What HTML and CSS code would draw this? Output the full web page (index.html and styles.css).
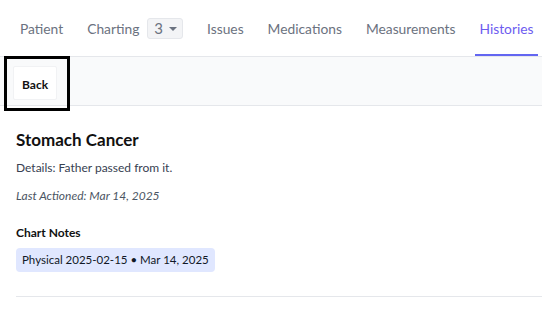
FILE: index.html
```html
<!doctype html>
<html>
  <head>
    <meta charset="utf-8">
    <title>Histories</title>
    <link rel="stylesheet" href="styles.css">
  </head>
  <body>
    <nav class="tabs">
      <a class="tab">Patient</a>
      <a class="tab">Charting <span class="count-select">3 <span class="caret"></span></span></a>
      <a class="tab">Issues</a>
      <a class="tab">Medications</a>
      <a class="tab">Measurements</a>
      <a class="tab active">Histories</a>
    </nav>
    <div class="toolbar">
      <button class="back">Back</button>
      <div class="highlight"></div>
    </div>
    <div class="history">
      <h2>Stomach Cancer</h2>
      <p class="details">Details: Father passed from it.</p>
      <p class="actioned">Last Actioned: Mar 14, 2025</p>
      <h3>Chart Notes</h3>
      <div class="notes">
        <span class="note-chip">Physical 2025-02-15 &bull; Mar 14, 2025</span>
      </div>
      <hr class="divider">
    </div>
  </body>
</html>
```

FILE: styles.css
```css
html, body {
  margin: 0;
  padding: 0;
  background: #fff;
  font-family: Lato, "Noto Sans", sans-serif;
  color: #111827;
}

.tabs {
  display: flex;
  align-items: center;
  gap: 16px;
  height: 56px;
  padding-left: 16px;
  border-bottom: 1px solid #e5e7eb;
  overflow: hidden;
}
.tab {
  display: flex;
  align-items: center;
  height: 100%;
  padding: 2px 4px 0;
  box-sizing: border-box;
  font-size: 13.8px;
  color: #6b7280;
  white-space: nowrap;
  border-bottom: 2px solid transparent;
}
.tab.active {
  color: #6d5cf0;
  border-bottom-color: #6366f1;
}
.count-select {
  display: inline-flex;
  align-items: center;
  gap: 6px;
  margin-left: 8px;
  height: 21px;
  padding: 0 5px 0 6px;
  box-sizing: border-box;
  background: #f3f4f6;
  border: 1px solid #e5e7eb;
  border-radius: 3px;
  font-size: 15px;
  color: #6b7280;
}
.caret {
  width: 0;
  height: 0;
  border-left: 4px solid transparent;
  border-right: 4px solid transparent;
  border-top: 4px solid #6b7280;
  margin-top: 2px;
}

.toolbar {
  position: relative;
  display: flex;
  align-items: center;
  height: 48px;
  padding-left: 13px;
  background: #f9fafb;
  border-bottom: 1px solid #e5e7eb;
}
.back {
  height: 34px;
  padding: 3px 8px 0;
  margin-top: 4px;
  background: #fff;
  border: 1px solid #f1f2f4;
  border-radius: 2px;
  font-family: inherit;
  font-size: 12px;
  font-weight: 700;
  color: #111;
}
.highlight {
  position: absolute;
  left: 4px;
  top: -1px;
  width: 60px;
  height: 49px;
  border: 3px solid #000;
}

.history {
  padding: 24px 0 0 16px;
}
.history h2 {
  margin: 0 0 9px;
  font-size: 17px;
  line-height: 20px;
  font-weight: 700;
  color: #111;
}
.history p {
  margin: 0 0 10px;
  font-size: 12px;
  line-height: 18px;
  color: #374151;
}
.history .actioned {
  font-style: italic;
  color: #4b5563;
  margin-bottom: 19px;
}
.history h3 {
  margin: 0 0 6px;
  font-size: 12px;
  line-height: 18px;
  font-weight: 700;
  color: #111;
}
.notes {
  display: flex;
}
.note-chip {
  height: 24px;
  padding: 0 6px;
  box-sizing: border-box;
  line-height: 24px;
  font-size: 11.5px;
  color: #111827;
  background: #e0e7ff;
  border-radius: 4px;
}
.divider {
  margin: 24px 0 0;
  border: 0;
  border-top: 1px solid #e5e7eb;
}
```
